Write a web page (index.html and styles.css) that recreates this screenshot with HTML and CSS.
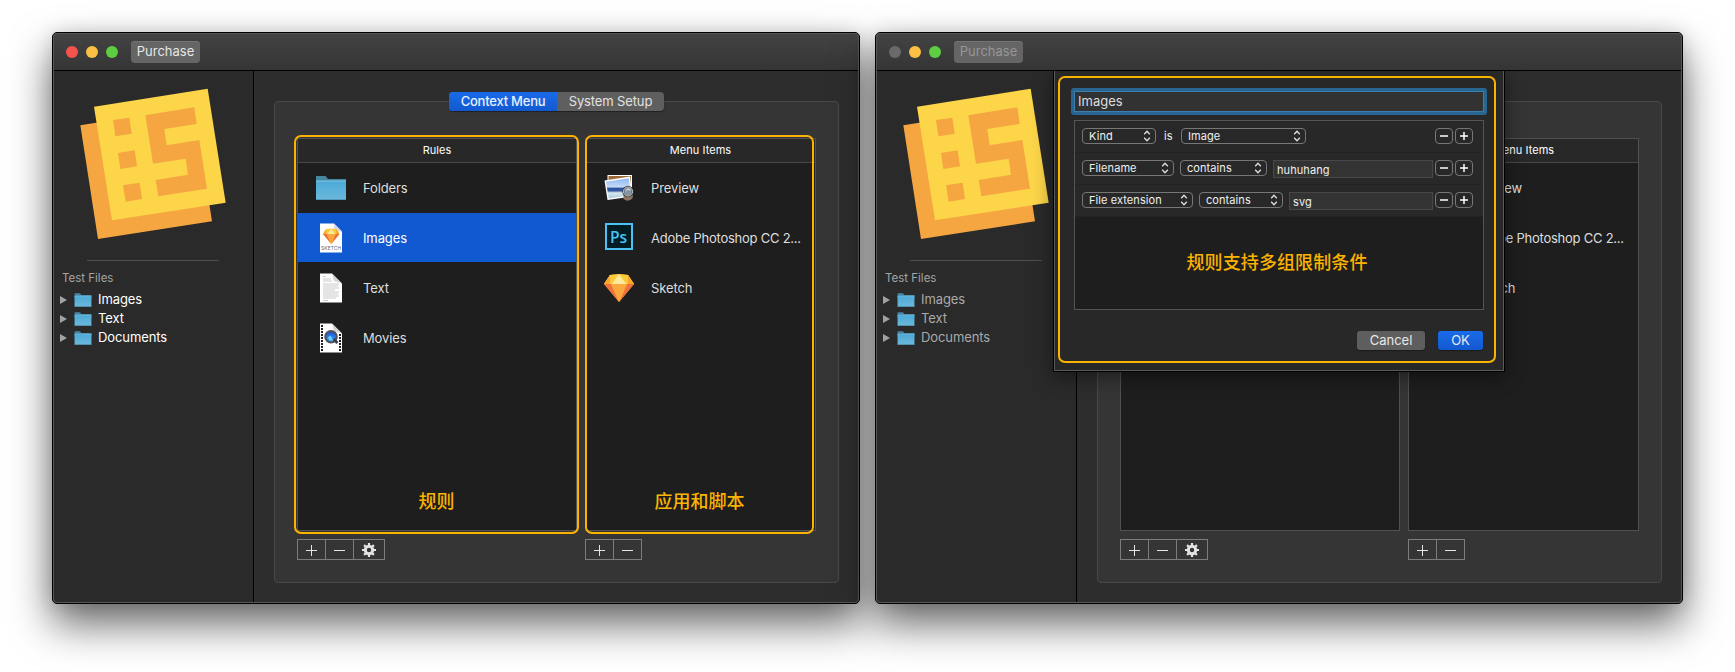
FILE: index.html
```html
<!DOCTYPE html>
<html lang="en">
<head>
<meta charset="utf-8">
<title>Context Menu Rules</title>
<link rel="stylesheet" href="styles.css">
</head>
<body>
<svg class="defs" aria-hidden="true">
  <defs>
    <linearGradient id="gFolder" x1="0" y1="0" x2="0" y2="1"><stop offset="0" stop-color="#4ba9d6"/><stop offset="1" stop-color="#6cb9dc"/></linearGradient>
    <linearGradient id="gQt" x1="0" y1="0" x2="0" y2="1"><stop offset="0" stop-color="#1a48d8"/><stop offset="1" stop-color="#3fb0ff"/></linearGradient>
    <linearGradient id="gSky" x1="0" y1="0" x2="0" y2="1"><stop offset="0" stop-color="#8fb6f0"/><stop offset=".45" stop-color="#c6dcf8"/><stop offset=".47" stop-color="#2b4f9c"/><stop offset=".62" stop-color="#35589f"/><stop offset=".72" stop-color="#d9e8ee"/><stop offset="1" stop-color="#aacbdd"/></linearGradient>
    <symbol id="logo" viewBox="120 204 438 456">
      <path fill="#f5a641" d="M121 316L462 262L516 604L174 657Z"/>
      <path fill="#fcd549" d="M162 260L503 206L557 548L216 601Z"/>
      <path fill="#f5a641" d="M219 300L268 293L275 341L226 349ZM234 399L284 391L291 439L241 447ZM249 496L299 488L306 537L257 545ZM316 286L463 262L470 312L373 327L380 376L478 360L501 506L355 529L347 480L444 464L437 416L339 431Z"/>
    </symbol>
    <symbol id="folder" viewBox="0 0 32 32">
      <path fill="#4686a3" d="M1 4.500Q1 4 1.500 4H10.500L13 7H30.500Q31 7 31 7.500V14H1Z"/>
      <path fill="url(#gFolder)" d="M1 9H31V28H1Z"/>
      <path fill="#83c8e6" d="M1 8.500H31V9.500H1Z"/>
      <path fill="#4a8fae" d="M1 27.200H31V28H1Z"/>
    </symbol>
    <symbol id="gem" viewBox="0 0 30 28">
      <path fill="#fdb92b" d="M6 1L15 0L24 1L30 10L15 28L0 10Z"/>
      <path fill="#fcc93c" d="M6 1L15 0L24 1L30 10H0Z"/>
      <path fill="#ffe99a" d="M15 0L22 10H8Z"/>
      <path fill="#f0703a" d="M0 10H7L15 28ZM30 10H23L15 28Z"/>
      <path fill="#f9a73e" d="M7 10H23L15 28Z"/>
      <path fill="#f9a72c" d="M6 1L0 10H6ZM24 1L30 10H24Z"/>
    </symbol>
    <symbol id="doc-sketch" viewBox="0 0 32 32">
      <path fill="#fff" d="M5 1.500H19L27 9.500V30.500H5Z"/>
      <path fill="#d4d8e2" d="M19 1.500V9.500H27Z"/>
      <use href="#gem" x="8" y="6.500" width="16.500" height="15.500"/>
      <text x="6" y="28.200" font-family="Inter, sans-serif" font-size="4.800" textLength="20" fill="#666">SKETCH</text>
    </symbol>
    <symbol id="doc-text" viewBox="0 0 32 32">
      <path fill="#fff" d="M5 1.500H17L27 11.500V30.500H5Z"/>
      <path fill="#d3d3d3" d="M17 1.500L19 9L27 11.500Z"/>
      <path stroke="#b5b5b5" stroke-width=".7" d="M8 4.500H11M8 7H16M8 9H17M8 12H24M8 14H23M8 16H24M8 18H20M8 20H24M8 22H23M8 24H24M8 26H21M8 28.500H13" fill="none"/>
    </symbol>
    <symbol id="doc-movie" viewBox="0 0 32 32">
      <path fill="#fff" d="M5 1.500H17L27 11.500V30.500H5Z"/>
      <path fill="#d3d3d3" d="M17 1.500L19 9L27 11.500Z"/>
      <path stroke="#1e1e1e" stroke-width="2" stroke-dasharray="1.900 1.100" d="M7 3V30M25 12V30" fill="none"/>
      <circle cx="16" cy="14.800" r="5.700" fill="url(#gQt)" stroke="#4d535c" stroke-width="2.200"/>
      <path d="M18.500 17L22.500 21" stroke="#3a3f47" stroke-width="2.800"/>
      <path d="M13 15.500L15.500 13.500L18 18.500L14.500 18Z" fill="#6fd4ff"/>
    </symbol>
    <symbol id="preview" viewBox="0 0 32 32">
      <path fill="#fff" d="M4.500 3H29V24H4.500Z"/><path fill="#9b6a35" d="M5.500 4H28V23H5.500Z"/>
      <path fill="#fff" d="M1.500 8.500L27 4.500L29.500 24.500L4.500 28Z"/>
      <path fill="url(#gSky)" d="M3 9.800L25.800 6.200L28 23.300L5.700 26.500Z"/>
      <path fill="#8b7762" d="M20.500 23H29.500V26.500Q25 30.500 20.500 27Z"/>
      <circle cx="25" cy="19.500" r="4.700" fill="#8196a8" stroke="#333" stroke-width="2"/>
      <circle cx="25" cy="19.500" r="4.500" fill="none" stroke="#d5d5d5" stroke-width="1"/>
      <path d="M22.500 19Q24.500 15.500 27.500 18" stroke="#eee" fill="none"/>
    </symbol>
    <symbol id="ps" viewBox="0 0 32 32">
      <path fill="#001d26" stroke="#4bc2f4" stroke-width="2" d="M3 2H29V27H3Z"/>
      <text x="7" y="20.500" font-family="Open Sans, sans-serif" font-size="16" font-weight="600" textLength="17" lengthAdjust="spacingAndGlyphs" fill="#4bc2f4">Ps</text>
    </symbol>
    <symbol id="plus" viewBox="0 0 12 12"><path d="M5.500 1V12M0 6.500H11" stroke="#e4e4e4" fill="none"/></symbol>
    <symbol id="minus" viewBox="0 0 12 12"><path d="M0 6.500H11" stroke="#e4e4e4" fill="none"/></symbol>
    <symbol id="gear" viewBox="0 0 14 14">
      <circle cx="7" cy="7" r="3.700" fill="none" stroke="#e4e4e4" stroke-width="3"/>
      <path d="M7 0V3M7 11V14M0 7H3M11 7H14M2.100 2.100L4 4M10 10L11.900 11.900M11.900 2.100L10 4M4 10L2.100 11.900" stroke="#e4e4e4" stroke-width="2.200"/>
    </symbol>
    <symbol id="updown" viewBox="0 0 8 12"><path d="M1.200 4.300L4 1.300L6.800 4.300M1.200 7.700L4 10.700L6.800 7.700" stroke="#e0e0e0" stroke-width="1.300" fill="none"/></symbol>
    <symbol id="bold-minus" viewBox="0 0 8 8"><path d="M0 4H8" stroke="#fff" stroke-width="1.500"/></symbol>
    <symbol id="bold-plus" viewBox="0 0 8 8"><path d="M0 4H8M4 0V8" stroke="#fff" stroke-width="1.500"/></symbol>
  </defs>
</svg>

<section class="window">
  <header class="titlebar">
    <i class="light red"></i><i class="light yellow"></i><i class="light green"></i>
    <button class="purchase">Purchase</button>
  </header>
  <div class="content">
    <aside class="sidebar">
      <svg class="logo"><use href="#logo"/></svg>
      <hr class="rule">
      <div class="tree-title">Test Files</div>
      <div class="tree-row"><i class="arrow"></i><svg class="tree-icon"><use href="#folder"/></svg><span>Images</span></div>
      <div class="tree-row"><i class="arrow"></i><svg class="tree-icon"><use href="#folder"/></svg><span>Text</span></div>
      <div class="tree-row"><i class="arrow"></i><svg class="tree-icon"><use href="#folder"/></svg><span>Documents</span></div>
    </aside>
    <main class="main">
      <div class="group">
        <div class="tabs"><span class="tab active">Context Menu</span><span class="tab">System Setup</span></div>
        <div class="columns">
          <div class="column rules">
            <div class="table">
              <div class="table-head">Rules</div>
              <div class="item"><svg class="icon"><use href="#folder"/></svg><span>Folders</span></div>
              <div class="item selected"><svg class="icon"><use href="#doc-sketch"/></svg><span>Images</span></div>
              <div class="item"><svg class="icon"><use href="#doc-text"/></svg><span>Text</span></div>
              <div class="item"><svg class="icon"><use href="#doc-movie"/></svg><span>Movies</span></div>
              <div class="note-frame"><span class="note">规则</span></div>
            </div>
            <div class="tools"><b class="tool"><svg class="sign"><use href="#plus"/></svg></b><b class="tool"><svg class="sign"><use href="#minus"/></svg></b><b class="tool wide"><svg class="gear"><use href="#gear"/></svg></b></div>
          </div>
          <div class="column apps">
            <div class="table">
              <div class="table-head">Menu Items</div>
              <div class="item"><svg class="icon"><use href="#preview"/></svg><span>Preview</span></div>
              <div class="item"><svg class="icon"><use href="#ps"/></svg><span class="long">Adobe Photoshop CC 2...</span></div>
              <div class="item"><svg class="icon gem"><use href="#gem"/></svg><span>Sketch</span></div>
              <div class="note-frame"><span class="note">应用和脚本</span></div>
            </div>
            <div class="tools"><b class="tool"><svg class="sign"><use href="#plus"/></svg></b><b class="tool"><svg class="sign"><use href="#minus"/></svg></b></div>
          </div>
        </div>
      </div>
    </main>
  </div>
</section>

<section class="window blocked">
  <header class="titlebar">
    <i class="light off"></i><i class="light yellow"></i><i class="light green"></i>
    <button class="purchase">Purchase</button>
  </header>
  <div class="content">
    <aside class="sidebar">
      <svg class="logo"><use href="#logo"/></svg>
      <hr class="rule">
      <div class="tree-title">Test Files</div>
      <div class="tree-row"><i class="arrow"></i><svg class="tree-icon"><use href="#folder"/></svg><span>Images</span></div>
      <div class="tree-row"><i class="arrow"></i><svg class="tree-icon"><use href="#folder"/></svg><span>Text</span></div>
      <div class="tree-row"><i class="arrow"></i><svg class="tree-icon"><use href="#folder"/></svg><span>Documents</span></div>
    </aside>
    <main class="main">
      <div class="group">
        <div class="tabs empty"></div>
        <div class="columns">
          <div class="column rules">
            <div class="table"></div>
            <div class="tools"><b class="tool"><svg class="sign"><use href="#plus"/></svg></b><b class="tool"><svg class="sign"><use href="#minus"/></svg></b><b class="tool wide"><svg class="gear"><use href="#gear"/></svg></b></div>
          </div>
          <div class="column apps">
            <div class="table">
              <div class="table-head">Menu Items</div>
              <div class="item"><i class="icon"></i><span>Preview</span></div>
              <div class="item"><i class="icon"></i><span class="long">Adobe Photoshop CC 2...</span></div>
              <div class="item"><i class="icon"></i><span>Sketch</span></div>
            </div>
            <div class="tools"><b class="tool"><svg class="sign"><use href="#plus"/></svg></b><b class="tool"><svg class="sign"><use href="#minus"/></svg></b></div>
          </div>
        </div>
      </div>
    </main>
    <div class="sheet-clip">
      <div class="sheet">
        <div class="sheet-frame">
          <div class="name-field">Images</div>
          <div class="conditions">
            <div class="cond">
              <span class="popup kind">Kind<svg class="chev"><use href="#updown"/></svg></span>
              <span class="is">is</span>
              <span class="popup image">Image<svg class="chev"><use href="#updown"/></svg></span>
              <span class="fill"></span>
              <b class="mini"><svg class="mini-sign"><use href="#bold-minus"/></svg></b><b class="mini"><svg class="mini-sign"><use href="#bold-plus"/></svg></b>
            </div>
            <div class="cond">
              <span class="popup filename">Filename<svg class="chev"><use href="#updown"/></svg></span>
              <span class="popup contains">contains<svg class="chev"><use href="#updown"/></svg></span>
              <span class="value">huhuhang</span>
              <b class="mini"><svg class="mini-sign"><use href="#bold-minus"/></svg></b><b class="mini"><svg class="mini-sign"><use href="#bold-plus"/></svg></b>
            </div>
            <div class="cond">
              <span class="popup extension">File extension<svg class="chev"><use href="#updown"/></svg></span>
              <span class="popup contains-b">contains<svg class="chev"><use href="#updown"/></svg></span>
              <span class="value">svg</span>
              <b class="mini"><svg class="mini-sign"><use href="#bold-minus"/></svg></b><b class="mini"><svg class="mini-sign"><use href="#bold-plus"/></svg></b>
            </div>
            <div class="cond-note">规则支持多组限制条件</div>
          </div>
          <div class="actions"><button class="btn cancel">Cancel</button><button class="btn ok">OK</button></div>
        </div>
      </div>
    </div>
  </div>
</section>
</body>
</html>
```
FILE: styles.css
```css
* { box-sizing: border-box; }

body {
  margin: 0;
  width: 1735px;
  height: 672px;
  overflow: hidden;
  padding: 32px 52px;
  display: flex;
  gap: 15px;
  background: #fff;
  color: #dedede;
  font: 13px/16px Inter, "Noto Sans CJK SC", sans-serif;
}

.defs { position: absolute; width: 0; height: 0; }
svg { display: block; flex: none; }

/* Window chrome */
.window {
  position: relative;
  flex: none;
  width: 808px;
  height: 572px;
  border: 1px solid #000;
  border-radius: 5px;
  background: #2d2d2d;
  box-shadow: 0 20px 42px rgba(0, 0, 0, .6), 0 0 18px rgba(0, 0, 0, .12);
}
.window::after {
  content: "";
  position: absolute;
  inset: 0;
  border: 1px solid #565656;
  border-radius: 4px;
  pointer-events: none;
}
.titlebar {
  height: 38px;
  border-bottom: 1px solid #000;
  border-radius: 4px 4px 0 0;
  background: linear-gradient(#434343, #353535);
  display: flex;
  align-items: center;
  padding-left: 13px;
}
.light { width: 12px; height: 12px; border-radius: 50%; margin-right: 8px; }
.red { background: #f4534d; }
.yellow { background: #fbbf44; }
.green { background: #5dce42; }
.off { background: #6a6a6a; }
.purchase {
  margin: 0 0 0 5px;
  width: 69px;
  height: 22px;
  padding: 0 0 1px;
  border: 0;
  border-radius: 4px;
  background: #656565;
  box-shadow: inset 0 1px #747474;
  color: #e6e6e6;
  font: inherit;
}
.blocked .purchase { color: #979797; }

.content { position: relative; display: flex; height: 532px; }

/* Sidebar */
.sidebar {
  width: 201px;
  border-right: 1px solid #000;
  background: #2a2a2a;
  border-radius: 0 0 0 4px;
}
.logo { width: 146px; height: 152px; margin: 17px 0 0 27px; }
.rule { width: 132px; height: 1px; border: 0; margin: 20px 0 0 34px; background: #4e4e4e; }
.tree-title { margin: 10px 0 0 9px; font-size: 11.5px; line-height: 15px; color: #a4a4a4; height: 19px; }
.tree-row { height: 19px; padding-left: 7px; display: flex; align-items: center; color: #fff; letter-spacing: -.1px; }
.tree-row span { margin-top: -1px; }
.blocked .tree-row { color: #a9a9a9; }
.arrow { border-left: 7px solid #a2a2a2; border-top: 4.500px solid transparent; border-bottom: 4.500px solid transparent; }
.tree-icon { width: 18px; height: 18px; margin: 0 6px 0 7px; }

/* Main group */
.main { flex: 1; padding: 30px 0 0 20px; }
.group {
  width: 565px;
  height: 482px;
  border: 1px solid #484848;
  border-radius: 4px;
  background: #353535;
  display: flex;
  flex-direction: column;
}
.tabs {
  align-self: center;
  display: flex;
  width: 215px;
  height: 19px;
  margin-top: -10px;
  border-radius: 4px;
  overflow: hidden;
  background: #5f5f5f;
  box-shadow: 0 1px 1px rgba(0, 0, 0, .4);
}
.tabs.empty { visibility: hidden; }
.tab { flex: 1; text-align: center; line-height: 19px; color: #e2e2e2; letter-spacing: -.13px; }
.tab.active { flex: none; width: 108px; background: linear-gradient(#196ae8, #1259cf); color: #e6efff; font-weight: 500; letter-spacing: -.22px; }
.columns { display: flex; gap: 8px; margin: 27px 0 0 22px; }
.rules { width: 280px; }
.apps { width: 231px; }
.table { position: relative; height: 393px; border: 1px solid #505050; background: #1e1e1e; }
.table-head {
  height: 24px;
  border-bottom: 1px solid #484848;
  background: #282828;
  color: #fff;
  font-size: 11px;
  line-height: 23px;
  text-align: center;
  letter-spacing: .05px;
}
.item {
  height: 50px;
  padding-left: 17px;
  display: flex;
  align-items: center;
  gap: 16px;
  white-space: nowrap;
  letter-spacing: -.12px;
  border-bottom: 1px solid #1e1e1e;
}
.long { letter-spacing: -.24px; }
.selected { background: #1159d1; color: #fff; }
.icon { width: 32px; height: 32px; flex: none; }
.icon.gem { width: 30px; height: 28px; margin: 0 1px; }
.note-frame {
  position: absolute;
  inset: -4px -3px -4px -4px;
  border: 2px solid #fbb300;
  border-radius: 7px;
  display: flex;
  justify-content: center;
  align-items: flex-end;
  padding-bottom: 17px;
}
.apps .note-frame { left: -1px; right: 1px; }
.note, .cond-note { color: #fbb300; font-size: 18px; line-height: 27px; font-weight: 500; }
.tools { display: inline-flex; margin-top: 8px; height: 21px; border: 1px solid #7d7d7d; vertical-align: top; }
.tool { width: 28px; display: grid; place-items: center; border-right: 1px solid #7d7d7d; }
.tool:last-child { width: 27px; border-right: 0; }
.tool.wide:last-child { width: 30px; }
.sign { width: 12px; height: 12px; }
.gear { width: 14px; height: 14px; }

/* Sheet sliding out of the title bar */
.sheet-clip { position: absolute; left: 137px; top: 0; width: 530px; height: 350px; padding: 0 40px; overflow: hidden; }
.sheet {
  width: 452px;
  height: 301px;
  padding: 5px 8px 8px 4px;
  border: 1px solid #000;
  border-top: 0;
  background: #282828;
  box-shadow: inset 1px 0 #5a5a5a, inset -1px 0 #5a5a5a, inset 0 -1px #5a5a5a, 0 5px 18px rgba(0, 0, 0, .45);
}
.sheet-frame {
  width: 438px;
  height: 287px;
  border: 2px solid #fbb300;
  border-radius: 7px;
  padding: 10px 0 0 11px;
}
.name-field {
  width: 416px;
  height: 27px;
  border: 3px solid #286591;
  border-radius: 3px;
  background: #323232;
  box-shadow: inset 0 0 0 1px #3a7fae;
  padding-left: 4px;
  line-height: 20px;
}
.conditions { width: 410px; height: 190px; margin: 5px 0 0 3px; border: 1px solid #555; background: #1e1e1e; display: flex; flex-direction: column; }
.cond {
  height: 32px;
  padding: 0 10px 1px 7px;
  display: flex;
  align-items: center;
  background: #282828;
  border-bottom: 1px solid #232323;
  font-size: 11px;
  letter-spacing: .08px;
  color: #f0f0f0;
}
.popup {
  height: 16px;
  border: 1px solid #777;
  border-radius: 4px;
  display: flex;
  align-items: center;
  justify-content: space-between;
  padding: 0 4px 0 6px;
  margin-right: 6px;
  white-space: nowrap;
}
.chev { width: 8px; height: 12px; }
.kind { width: 74px; margin-right: 8px; }
.is { width: 17px; }
.image { width: 125px; }
.filename { width: 92px; }
.contains { width: 87px; }
.extension { width: 111px; }
.contains-b { width: 84px; }
.fill { flex: 1; }
.value { flex: 1; height: 18px; margin: 2px 2px 0 0; border: 1px solid #484848; background: #333; padding: 1px 0 0 3px; line-height: 17px; }
.mini { width: 18px; height: 16px; border: 1px solid #777; border-radius: 4px; display: grid; place-items: center; }
.mini + .mini { margin-left: 2px; }
.mini-sign { width: 8px; height: 8px; }
.cond-note { flex: 1; display: flex; align-items: center; justify-content: center; padding: 0 4px 1px 0; letter-spacing: .1px; }
.actions { display: flex; margin: 21px 0 0 286px; }
.btn {
  height: 19px;
  padding: 0;
  border: 0;
  border-radius: 3px;
  font: inherit;
  line-height: 19px;
  color: #e8e8e8;
  box-shadow: 0 1px 1px rgba(0, 0, 0, .35);
}
.cancel { width: 68px; margin-right: 13px; background: #5e5e5e; }
.ok { width: 45px; background: linear-gradient(#1a6bea, #1259cf); }
```
